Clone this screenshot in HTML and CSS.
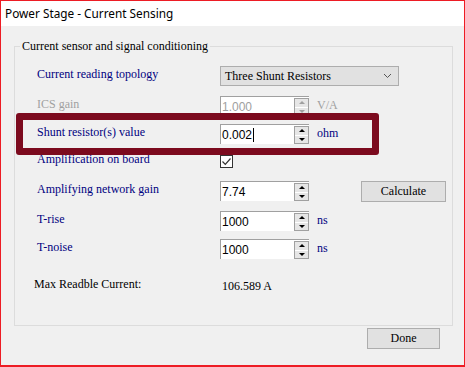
FILE: index.html
```html
<!DOCTYPE html>
<html>
<head>
<meta charset="utf-8">
<link rel="stylesheet" href="styles.css">
</head>
<body>
<div class="window">
  <div class="titlebar">Power Stage - Current Sensing</div>
  <div class="content">
    <div class="group">
      <div class="legend"><span>Current sensor and signal conditioning</span></div>
      <div class="row r1">
        <div class="label">Current reading topology</div>
        <div class="combo"><span>Three Shunt Resistors</span>
          <svg class="chev" width="9" height="6" viewBox="0 0 9 6"><path d="M1 1 L4.5 4.5 L8 1" fill="none" stroke="#555" stroke-width="1"/></svg>
        </div>
      </div>
      <div class="row r2">
        <div class="label disabled">ICS gain</div>
        <div class="spin disabled-box"><span class="val grey">1.000</span>
          <div class="btns"><div class="b up"><i></i></div><div class="b down"><i></i></div></div>
        </div>
        <div class="unit grey">V/A</div>
      </div>
      <div class="row r3">
        <div class="label">Shunt resistor(s) value</div>
        <div class="spin"><span class="val">0.002<b class="caret"></b></span>
          <div class="btns"><div class="b up"><i></i></div><div class="b down"><i></i></div></div>
        </div>
        <div class="unit">ohm</div>
      </div>
      <div class="row r4">
        <div class="label">Amplification on board</div>
        <div class="check">
          <svg width="11" height="11" viewBox="0 0 11 11"><path d="M1.5 5.5 L4.3 8.3 L9.5 2.5" fill="none" stroke="#333" stroke-width="1.2"/></svg>
        </div>
      </div>
      <div class="row r5">
        <div class="label">Amplifying network gain</div>
        <div class="spin"><span class="val">7.74</span>
          <div class="btns"><div class="b up"><i></i></div><div class="b down"><i></i></div></div>
        </div>
        <div class="btn calc">Calculate</div>
      </div>
      <div class="row r6">
        <div class="label">T-rise</div>
        <div class="spin"><span class="val">1000</span>
          <div class="btns"><div class="b up"><i></i></div><div class="b down"><i></i></div></div>
        </div>
        <div class="unit">ns</div>
      </div>
      <div class="row r7">
        <div class="label">T-noise</div>
        <div class="spin"><span class="val">1000</span>
          <div class="btns"><div class="b up"><i></i></div><div class="b down"><i></i></div></div>
        </div>
        <div class="unit">ns</div>
      </div>
      <div class="row r8">
        <div class="label black">Max Readble Current:</div>
        <div class="result">106.589 A</div>
      </div>
    </div>
    <div class="footer"><div class="btn done">Done</div></div>
  </div>
  <div class="highlight"></div>
</div>
</body>
</html>
```
FILE: styles.css
```css
html, body { margin: 0; padding: 0; background: #fff; }
.window {
  position: relative;
  width: 465px; height: 367px; box-sizing: border-box;
  border: 1px solid #ed1c24; border-bottom-width: 2px;
  background: #f0f0f0;
  display: flex; flex-direction: column;
}
.titlebar {
  height: 25px; background: #fff;
  font-family: "Noto Sans", sans-serif; font-size: 11.8px; color: #000;
  line-height: 25px; padding-left: 4px;
}
.content { flex: 1; padding: 20px 0 0 13px; }
.group {
  width: 439px; height: 280px; box-sizing: border-box;
  border: 1px solid #dcdcdc;
  font-family: "Liberation Serif", serif; font-size: 12px;
}
.legend { height: 0; padding-left: 5px; }
.legend span {
  display: inline-block; background: #f0f0f0; padding: 0 2px;
  line-height: 14px; transform: translateY(-8px); color: #000;
}
.row { display: flex; align-items: center; height: 20px; padding-left: 22px; }
.r1 { margin-top: 19px; }
.r2 { margin-top: 10px; }
.r3 { margin-top: 8px; }
.r4 { margin-top: 7px; }
.r5 { margin-top: 10px; }
.r6 { margin-top: 10px; }
.r7 { margin-top: 8px; }
.r8 { margin-top: 17px; padding-left: 19px; }
.label { width: 183px; color: #000080; padding-bottom: 3px; }
.r8 .label { width: 188px; }
.label.disabled { color: #a0a0a0; }
.label.black { color: #000; }
.combo {
  width: 179px; height: 20px; box-sizing: border-box;
  background: #e1e1e1; border: 1px solid #adadad;
  display: flex; align-items: center; justify-content: space-between;
  padding: 0 6px 0 4px; color: #000;
}
.spin {
  width: 89px; height: 20px; box-sizing: border-box;
  background: #fff; border-left: 1px solid #a0a0a0; border-top: 1px solid #a0a0a0;
  display: flex; align-items: center; justify-content: space-between;
}
.val {
  padding-left: 1px; color: #000; display: flex; align-items: center;
  font-family: "Liberation Sans", sans-serif; font-size: 12px;
}
.grey { color: #a0a0a0 !important; }
.caret { display: inline-block; width: 1px; height: 14px; background: #000; margin-left: 1px; }
.btns {
  width: 15px; height: 18px; box-sizing: border-box; align-self: flex-end;
  border: 1px solid #a0a0a0; background: #fff;
  display: flex; flex-direction: column; gap: 1px; padding: 0;
}
.b { flex: 1; background: #e6e6e6; display: flex; align-items: center; justify-content: center; }
.b i { width: 0; height: 0; border-left: 3px solid transparent; border-right: 3px solid transparent; }
.up i { border-bottom: 3px solid #000; }
.down i { border-top: 3px solid #000; }
.disabled-box .b i { border-bottom-color: #a0a0a0; border-top-color: #a0a0a0; }
.unit { margin-left: 8px; color: #000080; padding-bottom: 2px; }
.check {
  width: 13px; height: 13px; box-sizing: border-box; border: 1px solid #333;
  background: #fff; display: flex; align-items: center; justify-content: center;
}
.btn {
  box-sizing: border-box; background: #e1e1e1; border: 1px solid #adadad;
  display: flex; align-items: center; justify-content: center;
  font-family: "Liberation Serif", serif; font-size: 12px; color: #000;
}
.calc { width: 85px; height: 21px; margin-left: 52px; }
.result { color: #000; }
.footer { display: flex; justify-content: flex-end; padding: 2px 24px 0 0; }
.done { width: 73px; height: 21px; }
.highlight {
  position: absolute; left: 15px; top: 112px; width: 363px; height: 42px;
  box-sizing: border-box; border: 7px solid #7c0a1e; border-radius: 3px;
}
```
